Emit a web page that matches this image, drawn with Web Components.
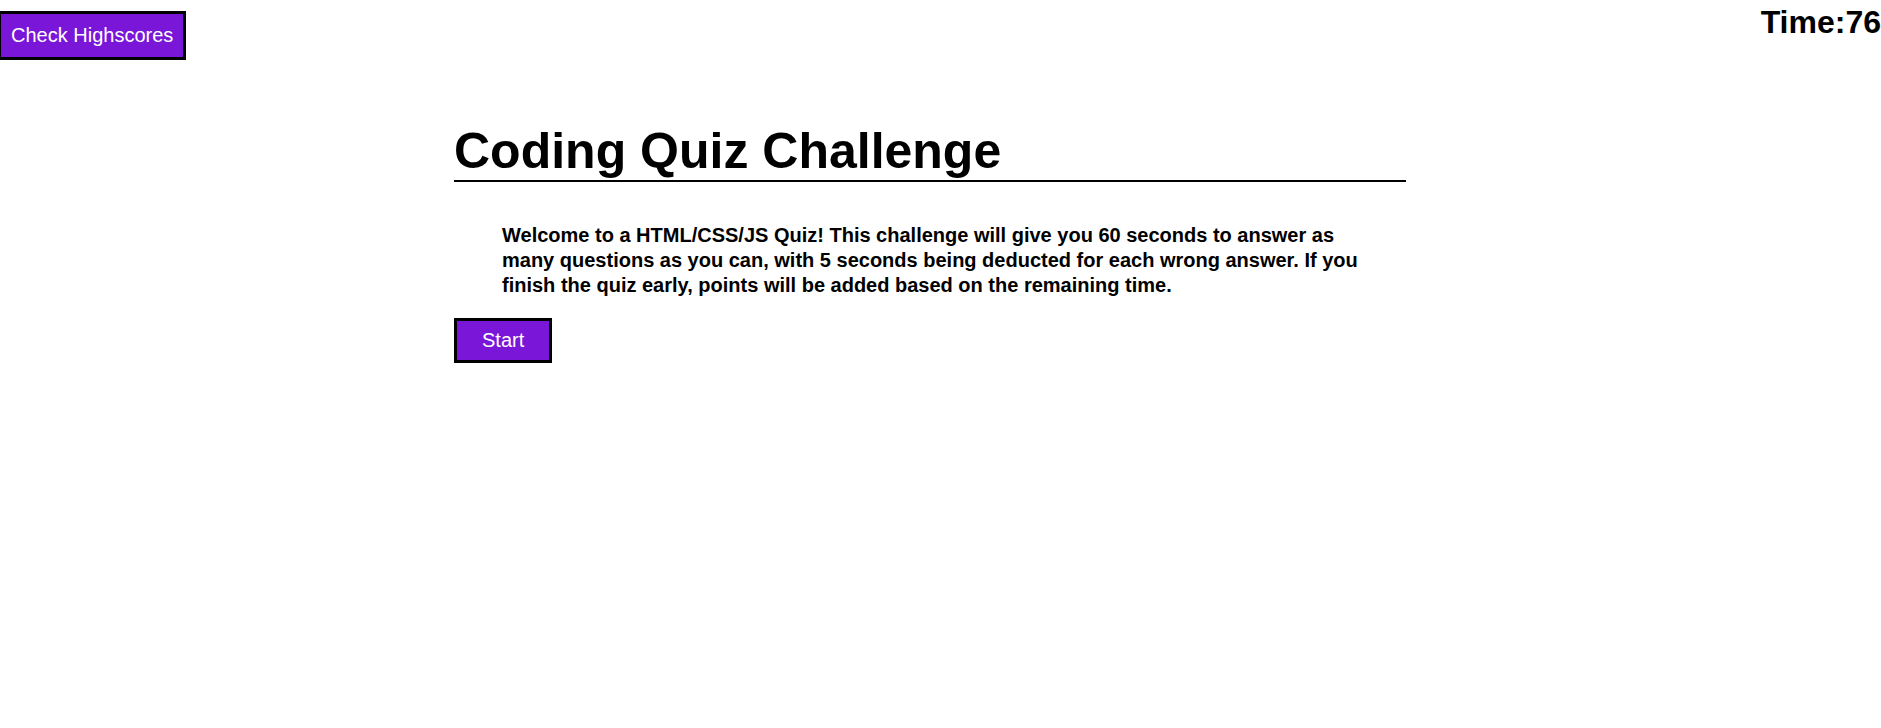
<!DOCTYPE html>
<html lang="en">
<head>
<meta charset="utf-8">
<meta name="viewport" content="width=device-width, initial-scale=1">
<title>Coding Quiz Challenge</title>
<style>
  body {
    margin: 0;
    background: #fff;
    color: #000;
    font-family: Arial, "Liberation Sans", sans-serif;
  }
</style>
</head>
<body>
<quiz-header>
  <quiz-button>Check Highscores</quiz-button>
  <quiz-timer slot="timer" seconds="76"></quiz-timer>
</quiz-header>
<quiz-intro>
  <span slot="title">Coding Quiz Challenge</span>
  Welcome to a HTML/CSS/JS Quiz! This challenge will give you 60 seconds to answer as many questions as you can, with 5 seconds being deducted for each wrong answer. If you finish the quiz early, points will be added based on the remaining time.
  <quiz-button slot="action" class="start">Start</quiz-button>
</quiz-intro>
<style>
  .start { --pad: 8px 25px; }
</style>

<template id="button-template">
  <style>
    :host { display: inline-block; }
    button {
      display: block;
      margin: 0;
      padding: var(--pad, 10px);
      border: 3px solid #000;
      border-radius: 0;
      background: #7a16d8;
      color: #fff;
      font: 20px/23px Arial, "Liberation Sans", sans-serif;
      cursor: pointer;
    }
  </style>
  <button type="button"><slot></slot></button>
</template>

<template id="timer-template">
  <style>
    :host { display: block; font-size: 32px; font-weight: bold; line-height: 36px; }
  </style>
  <div role="timer">Time:<span></span></div>
</template>

<template id="header-template">
  <style>
    :host { display: block; }
    header {
      display: flex;
      justify-content: space-between;
      align-items: flex-start;
      margin-left: -2px;
      padding-top: 4px;
    }
    .actions { padding-top: 7px; }
  </style>
  <header>
    <div class="actions"><slot></slot></div>
    <slot name="timer"></slot>
  </header>
</template>

<template id="intro-template">
  <style>
    :host { display: block; }
    main {
      box-sizing: border-box;
      max-width: 952px;
      margin: 63px auto 0;
      position: relative;
    }
    .page { padding-right: 21px; }
    h1 {
      margin: 0;
      border-bottom: 2px solid #000;
      font-size: 50px;
      line-height: 57px;
    }
    p {
      margin: 41px 48px 20px;
      font-size: 20px;
      font-weight: bold;
      line-height: 25px;
    }
  </style>
  <div class="page">
    <main>
      <h1><slot name="title"></slot></h1>
      <p><slot></slot></p>
      <slot name="action"></slot>
    </main>
  </div>
</template>

<script>
  class TemplateElement extends HTMLElement {
    constructor() {
      super();
      const template = document.getElementById(this.constructor.template);
      this.attachShadow({ mode: "open" }).append(template.content.cloneNode(true));
    }
  }

  customElements.define("quiz-button", class extends TemplateElement {
    static template = "button-template";
  });

  customElements.define("quiz-timer", class extends TemplateElement {
    static template = "timer-template";
    static observedAttributes = ["seconds"];
    attributeChangedCallback(name, previous, value) {
      this.shadowRoot.querySelector("span").textContent = value;
    }
  });

  customElements.define("quiz-header", class extends TemplateElement {
    static template = "header-template";
  });

  customElements.define("quiz-intro", class extends TemplateElement {
    static template = "intro-template";
  });
</script>
</body>
</html>
